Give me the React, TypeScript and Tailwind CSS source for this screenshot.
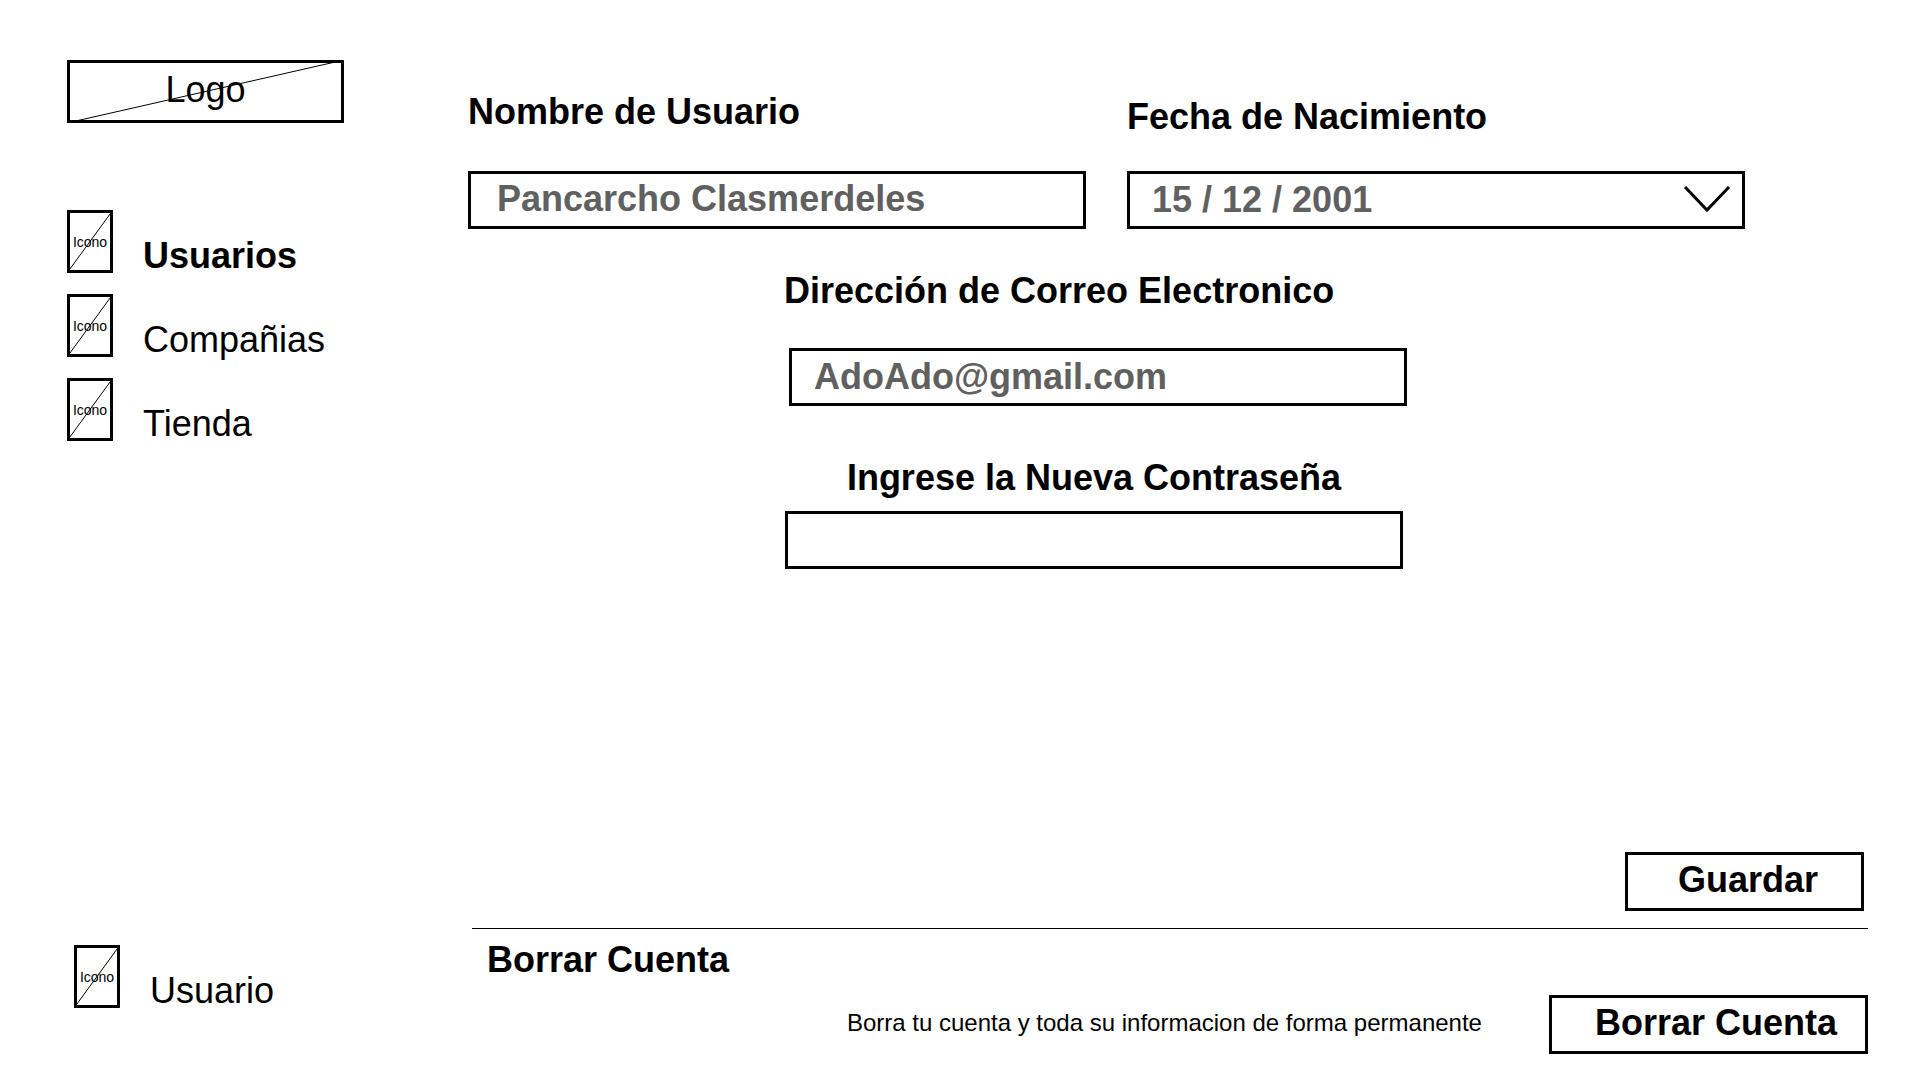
import React from "react";

function Diagonal() {
  return (
    <svg
      className="pointer-events-none absolute -inset-[3px] h-[calc(100%+6px)] w-[calc(100%+6px)]"
      viewBox="0 0 100 100"
      preserveAspectRatio="none"
      aria-hidden="true"
    >
      <line x1="0" y1="100" x2="100" y2="0" stroke="black" strokeWidth="1" vectorEffect="non-scaling-stroke" />
    </svg>
  );
}

function IconBox() {
  return (
    <span className="relative flex h-[63px] w-[46px] shrink-0 items-center justify-center border-3 border-black text-sm font-normal">
      Icono
      <Diagonal />
    </span>
  );
}

function NavItem({ label, active = false }: { label: string; active?: boolean }) {
  return (
    <a
      href="#"
      aria-current={active ? "page" : undefined}
      className={active ? "flex items-start gap-[30px] font-bold" : "flex items-start gap-[30px]"}
    >
      <IconBox />
      <span className="pt-[26px] text-4xl">{label}</span>
    </a>
  );
}

const box =
  "block h-[58px] w-full appearance-none rounded-none border-3 border-black bg-white text-4xl font-bold text-[#606060] outline-none";

export default function App() {
  return (
    <div className="flex min-h-screen bg-white font-['Liberation_Sans',Arial,sans-serif] text-black">
      <aside className="flex w-[468px] shrink-0 flex-col items-start pt-[60px] pb-[69px] pl-[67px]">
        <div className="relative flex h-[63px] w-[277px] items-center justify-center border-3 border-black pb-1 text-4xl">
          Logo
          <Diagonal />
        </div>
        <nav className="mt-[87px] flex flex-col gap-[18px]">
          <NavItem label="Usuarios" active />
          <NavItem label="Compañias" />
          <NavItem label="Tienda" />
        </nav>
        <div className="mt-auto pl-[7px]">
          <NavItem label="Usuario" />
        </div>
      </aside>

      <main className="flex min-w-0 flex-1 flex-col pt-[92px] pr-[52px] pb-[26px]">
        <form className="flex flex-1 flex-col" onSubmit={(e) => e.preventDefault()}>
          <div className="mr-[123px] grid grid-cols-2 items-end gap-[41px]">
            <div>
              <label htmlFor="nombre" className="mb-[39px] block text-4xl font-bold">
                Nombre de Usuario
              </label>
              <input id="nombre" type="text" defaultValue="Pancarcho Clasmerdeles" className={`${box} pb-0.5 pl-[26px]`} />
            </div>
            <div>
              <label htmlFor="fecha" className="mb-[34px] block text-4xl font-bold">
                Fecha de Nacimiento
              </label>
              <div className="relative">
                <select id="fecha" className={`${box} pl-[22px]`}>
                  <option>15 / 12 / 2001</option>
                </select>
                <svg
                  className="pointer-events-none absolute top-[14px] right-[14px] h-7 w-12"
                  viewBox="0 0 48 28"
                  fill="none"
                  stroke="black"
                  strokeWidth="3"
                  aria-hidden="true"
                >
                  <path d="M2 2 24 25 46 2" />
                </svg>
              </div>
            </div>
          </div>

          <div className="mt-[42px] ml-[316px] max-w-[623px]">
            <label htmlFor="correo" className="mb-[37px] block text-4xl font-bold">
              Dirección de Correo Electronico
            </label>
            <div className="pl-[5px]">
              <input id="correo" type="email" defaultValue="AdoAdo@gmail.com" className={`${box} pl-[22px]`} />
            </div>
          </div>

          <div className="mt-[52px] ml-[317px] max-w-[618px]">
            <label htmlFor="clave" className="mb-[13px] block text-center text-4xl font-bold">
              Ingrese la Nueva Contraseña
            </label>
            <input id="clave" type="password" className={`${box} px-[22px]`} />
          </div>

          <button
            type="submit"
            className="mt-auto mr-1 self-end border-3 border-black pt-[5px] pr-[43px] pb-2 pl-[50px] text-4xl font-bold"
          >
            Guardar
          </button>
        </form>

        <section className="mt-[17px] ml-1 border-t border-black pt-[11px]">
          <h2 className="pl-[15px] text-4xl font-bold">Borrar Cuenta</h2>
          <div className="mt-[15px] flex items-start justify-end gap-[67px]">
            <p className="pt-3 text-2xl">Borra tu cuenta y toda su informacion de forma permanente</p>
            <button
              type="button"
              className="shrink-0 border-3 border-black pt-[5px] pr-7 pb-2 pl-[43px] text-4xl font-bold"
            >
              Borrar Cuenta
            </button>
          </div>
        </section>
      </main>
    </div>
  );
}
